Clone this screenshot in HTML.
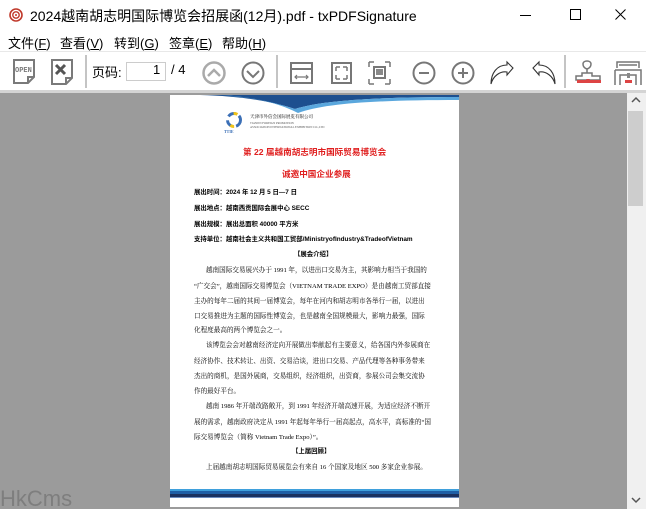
<!DOCTYPE html>
<html><head><meta charset="utf-8"><style>
*{margin:0;padding:0;box-sizing:border-box}
body{width:646px;height:509px;overflow:hidden;background:#fff;font-family:"Liberation Sans","Noto Sans CJK SC",sans-serif;position:relative}
.a{position:absolute;white-space:nowrap}
#title{left:30px;top:6px;font-size:14px;color:#000}
.menu{top:33px;font-size:13px;color:#000}
#view{position:absolute;left:0;top:93px;width:627px;height:416px;background:#9b9b9b}
#sb{position:absolute;left:627px;top:93px;width:19px;height:416px;background:#f0f0f0}
#thumb{position:absolute;left:628px;top:111px;width:15px;height:95px;background:#cdcdcd}
#page{position:absolute;left:170px;top:95px;width:289px;height:412px;background:#fff;overflow:hidden}
.t{position:absolute;white-space:nowrap;font-size:6.6px;color:#000;font-family:"Liberation Serif","Noto Serif CJK SC",serif}
.b{font-weight:bold;font-family:"Liberation Sans","Noto Sans CJK SC",sans-serif;font-size:6.4px}
.r{color:#e02020;font-weight:bold;font-size:8.6px;font-family:"Liberation Sans","Noto Sans CJK SC",sans-serif}
</style></head><body>
<svg class="a" style="left:9px;top:8px" width="14" height="14" viewBox="0 0 14 14"><circle cx="7" cy="7" r="6" fill="none" stroke="#c0392b" stroke-width="1.6"/><circle cx="7" cy="7" r="3.2" fill="none" stroke="#c0392b" stroke-width="1.4"/><circle cx="7" cy="7" r="1" fill="#c0392b"/></svg>
<div class="a" id="title">2024越南胡志明国际博览会招展函(12月).pdf - txPDFSignature</div>
<svg class="a" style="left:520px;top:15px" width="12" height="2"><rect width="11" height="1" fill="#000"/></svg>
<svg class="a" style="left:570px;top:9px" width="12" height="12"><rect x="0.5" y="0.5" width="10" height="10" fill="none" stroke="#000"/></svg>
<svg class="a" style="left:615px;top:9px" width="12" height="12"><path d="M0.5 0.5L10.5 10.5M10.5 0.5L0.5 10.5" stroke="#000"/></svg>
<div class="a menu" style="left:8px">文件(<u>F</u>)</div>
<div class="a menu" style="left:60px">查看(<u>V</u>)</div>
<div class="a menu" style="left:114px">转到(<u>G</u>)</div>
<div class="a menu" style="left:169px">签章(<u>E</u>)</div>
<div class="a menu" style="left:222px">帮助(<u>H</u>)</div>
<div class="a" style="left:0;top:51px;width:646px;height:1px;background:#e8e8e8"></div>
<svg class="a" style="left:0;top:52px" width="646" height="41" viewBox="0 52 646 41">
<g fill="none" stroke="#7a7a7a" stroke-width="2">
<path d="M14 60h20v17l-6 6h-14z"/><path d="M28 83v-6h6"/>
<path d="M52 60h20v18l-6 6h-14z"/><path d="M66 84v-6h6"/>
</g>
<text x="15" y="72" font-size="7" font-weight="bold" fill="#7a7a7a" font-family="Liberation Mono">OPEN</text>
<path d="M56 65l9 9M65 65l-9 9" stroke="#555" stroke-width="3"/>
<rect x="85.5" y="55" width="1" height="33" fill="#888"/>
<rect x="126.5" y="62.5" width="39" height="18" fill="#fff" stroke="#ccc"/>
<circle cx="214" cy="73" r="10.5" fill="none" stroke="#aaa" stroke-width="2.5"/><path d="M208 76l6-6 6 6" fill="none" stroke="#aaa" stroke-width="2.5"/>
<circle cx="253" cy="73" r="10.5" fill="none" stroke="#777" stroke-width="2"/><path d="M247 71l6 6 6-6" fill="none" stroke="#777" stroke-width="2"/>
<rect x="276.5" y="55" width="1" height="33" fill="#888"/>
<g fill="none" stroke="#777" stroke-width="2">
<rect x="291" y="63" width="21" height="20"/><path d="M291 69h21"/><path d="M295 77h13M297 75l-2 2 2 2M306 75l2 2-2 2" stroke-width="1.2"/>
<rect x="332" y="63" width="19" height="20"/>
<path d="M336 67h4M336 67v4M347 67h-4M347 67v4M336 79h4M336 79v-4M347 79h-4M347 79v-4" stroke-width="1.5"/>
<path d="M369 62h5M369 62v5M390 62h-5M390 62v5M369 84h5M369 84v-5M390 84h-5M390 84v-5" stroke-width="1.5"/>
<rect x="374" y="67" width="11" height="11"/>
<circle cx="424" cy="73" r="10.5"/><path d="M419 73h10"/>
<circle cx="463" cy="73" r="10.5"/><path d="M458 73h10M463 68v10"/>
</g>
<rect x="376" y="69" width="7" height="6" fill="#888"/>
<g fill="#fff" stroke="#333" stroke-width="1.1">
<path d="M491 84c2-8 9-13 16-12v3l6-7-6-6v3c-10 0-16 8-16 19z"/>
<path d="M555 84c-2-8-9-13-16-12v3l-6-7 6-6v3c10 0 16 8 16 19z"/>
</g>
<rect x="564.5" y="55" width="1" height="33" fill="#888"/>
<g fill="none" stroke="#777" stroke-width="1.5">
<path d="M587 73v-4c-3-1-4-3-4-5 0-2 2-3 4-3s4 1 4 3c0 2-1 4-4 5"/>
<path d="M582 73h10v3h8v4h-24v-4h6z"/>
<path d="M617 68v-6h22v6M615 70h26v15M615 70v15M620 85v-10h16v10"/>
<path d="M619 65h18"/>
</g>
<rect x="577" y="80" width="24" height="3" fill="#d44"/>
<path d="M586 79l2 2 2-2z" fill="#d44"/>
<rect x="625" y="80" width="7" height="3" fill="#d44"/><rect x="627" y="73" width="3" height="5" fill="#888"/>
<rect x="0" y="90" width="646" height="3" fill="#d4d4d4"/>
</svg>
<div class="a" style="left:92px;top:62px;font-size:13px">页码:</div>
<div class="a" style="left:153px;top:62px;font-size:13px">1</div>
<div class="a" style="left:171px;top:62px;font-size:13px">/ 4</div>
<div id="view"></div>
<div id="sb"></div><div id="thumb"></div>
<svg class="a" style="left:630px;top:96px" width="12" height="10"><path d="M2 6l4-4 4 4" fill="none" stroke="#555" stroke-width="1.5"/></svg>
<svg class="a" style="left:630px;top:495px" width="12" height="10"><path d="M2 3l4 4 4-4" fill="none" stroke="#555" stroke-width="1.5"/></svg>
<div id="page">
<svg style="position:absolute;left:0;top:0" width="289" height="30"><path d="M30 0C70 1 100 6 125 14 C150 6 200 2 289 2V0z" fill="#1d4f8f"/><path d="M50 0C90 3 110 9 128 18C155 8 210 5 289 5V2C200 2 150 6 125 14 100 6 75 1 50 0z" fill="#5aa7dd"/></svg>
<svg style="position:absolute;left:55px;top:16px" width="18" height="18"><circle cx="9" cy="9" r="6.5" fill="none" stroke="#3b6fb6" stroke-width="3" stroke-dasharray="8 4"/><circle cx="9" cy="9" r="6.5" fill="none" stroke="#f0c419" stroke-width="3" stroke-dasharray="4 16" stroke-dashoffset="-10"/></svg>
<div class="t" style="left:54px;top:34px;font-size:4px;color:#3b6fb6;font-weight:bold">TTIE</div>
<div class="t" style="left:80px;top:19px;font-size:4.5px">天津市外信会国际展览有限公司</div>
<div class="t" style="left:80px;top:26px;font-size:3px;color:#555">TIANJIN FOREIGN PROMOTION</div>
<div class="t" style="left:80px;top:30px;font-size:3px;color:#555">ASSOCIATION INTERNATIONAL EXHIBITION CO.,LTD</div>
<div class="t r" style="left:73px;top:51px">第 22 届越南胡志明市国际贸易博览会</div>
<div class="t r" style="left:112px;top:73px">诚邀中国企业参展</div>
<div class="t b" style="left:24px;top:92px">展出时间：2024 年 12 月 5 日—7 日</div>
<div class="t b" style="left:24px;top:108px">展出地点：越南西贡国际会展中心 SECC</div>
<div class="t b" style="left:24px;top:124px">展出规模：展出总面积 40000 平方米</div>
<div class="t b" style="left:24px;top:139px">支持单位：越南社会主义共和国工贸部/MinistryofIndustry&amp;TradeofVietnam</div>
<div class="t b" style="left:124px;top:154px">【展会介绍】</div>
<div class="t" style="left:36px;top:169px">越南国际交易展兴办于 1991 年，以进出口交易为主，其影响力相当于我国的</div>
<div class="t" style="left:24px;top:185px">“广交会”，越南国际交易博览会（VIETNAM TRADE EXPO）是由越南工贸部直接</div>
<div class="t" style="left:24px;top:200px">主办的每年二届的其间一届博览会，每年在河内和胡志明市各举行一届，以进出</div>
<div class="t" style="left:24px;top:215px">口交易推进为主题的国际性博览会，也是越南全国规模最大，影响力最强，国际</div>
<div class="t" style="left:24px;top:229px">化程度最高的两个博览会之一。</div>
<div class="t" style="left:36px;top:244px">该博览会会对越南经济定向开展做出奉献起有主要意义，给各国内外参展商在</div>
<div class="t" style="left:24px;top:260px">经济协作、技术转让、出资、交易洽谈，进出口交易、产品代理等各种事务带来</div>
<div class="t" style="left:24px;top:275px">杰出的商机，是国外展商，交易组织，经济组织，出资商，参展公司会集交流协</div>
<div class="t" style="left:24px;top:290px">作的最好平台。</div>
<div class="t" style="left:36px;top:305px">越南 1986 年开端改路敞开，到 1991 年经济开端高速开展，为适应经济不断开</div>
<div class="t" style="left:24px;top:321px">展的需求，越南政府决定从 1991 年起每年举行一届高起点，高水平，高标准的“国</div>
<div class="t" style="left:24px;top:336px">际交易博览会（简称 Vietnam Trade Expo）”。</div>
<div class="t b" style="left:122px;top:351px">【上届回顾】</div>
<div class="t" style="left:36px;top:366px">上届越南胡志明国际贸易展览会有来自 16 个国家及地区 500 多家企业参展。</div>
<div style="position:absolute;left:0;top:394px;width:289px;height:2px;background:#3fa0dc"></div>
<div style="position:absolute;left:0;top:396px;width:289px;height:3px;background:#1f5fa6"></div>
<div style="position:absolute;left:0;top:399px;width:289px;height:3px;background:#1b3260"></div>
<div style="position:absolute;left:0;top:402px;width:289px;height:1px;background:#6b8cc0"></div>
</div>
<div class="a" style="left:0;top:486px;font-size:22px;color:#777;opacity:.8">HkCms</div>
</body></html>
